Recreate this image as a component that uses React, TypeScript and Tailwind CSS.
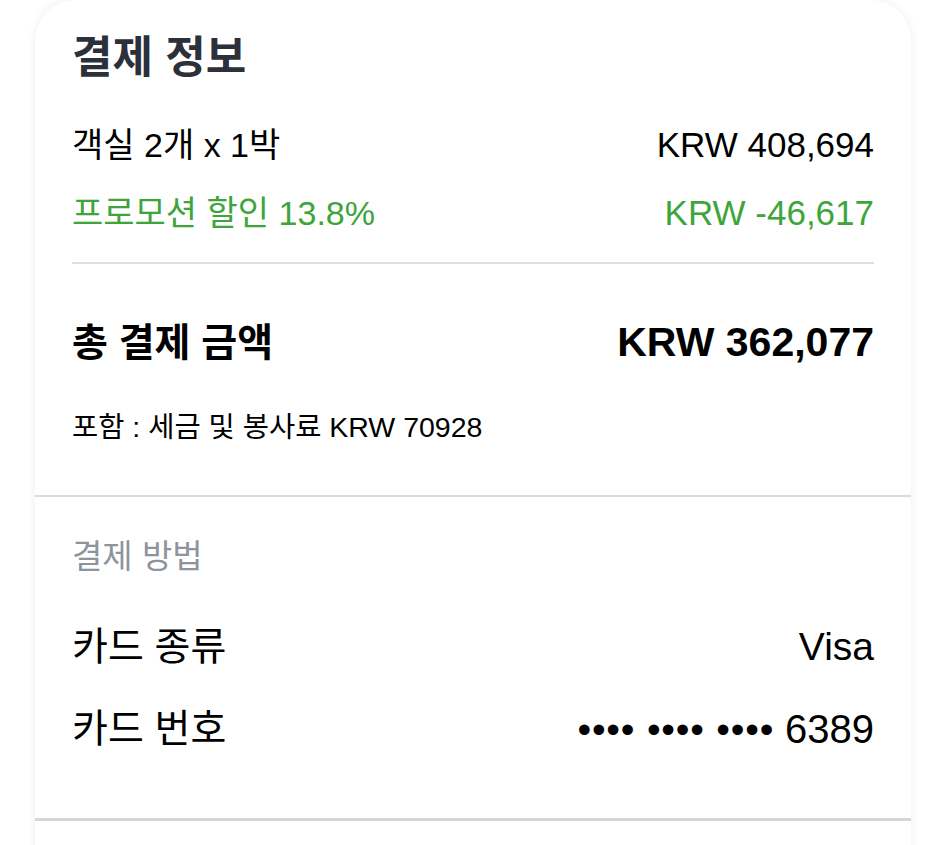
import React from 'react'

const font = "font-['Liberation_Sans','Noto_Sans_CJK_KR',sans-serif]"

export default function App() {
  return (
    <div className={`min-h-screen bg-white px-[35px] ${font}`}>
      <div className="rounded-t-[40px] bg-white shadow-[0_0_10px_rgba(0,0,0,0.07)]">
        {/* Payment summary */}
        <div className="px-[37px] pb-[48px]">
          <h2 className="h-[111px] pt-[34px] text-[44px] leading-[48px] font-bold text-[#2b303b]">결제 정보</h2>

          <div className="flex h-[68px] items-center justify-between text-[34px] text-black">
            <span>객실 2개 x 1박</span>
            <span className="text-[35px]">KRW 408,694</span>
          </div>
          <div className="flex h-[68px] items-center justify-between text-[34px] text-[#3da53a]">
            <span>프로모션 할인 13.8%</span>
            <span className="text-[35px]">KRW -46,617</span>
          </div>

          <div className="mt-[15px] h-[2px] bg-[#dedee3]" />

          <div className="mt-[45px] flex h-[68px] items-center justify-between font-bold text-black">
            <span className="text-[39px]">총 결제 금액</span>
            <span className="text-[41px]">KRW 362,077</span>
          </div>
          <div className="mt-[30px] flex h-[40px] items-center text-[28.5px] text-black">
            포함 : 세금 및 봉사료 KRW 70928
          </div>
        </div>

        {/* Payment method */}
        <div className="border-t-2 border-b-[3px] border-t-[#dcdce0] border-b-[#d6d6d6] px-[37px] pt-[40px] pb-[59px]">
          <div className="flex h-[40px] items-center text-[33px] text-[#8e949c]">결제 방법</div>
          <div className="mt-[40px] flex h-[60px] items-center justify-between text-[39px] text-black">
            <span>카드 종류</span>
            <span>Visa</span>
          </div>
          <div className="mt-[22px] flex h-[60px] items-center justify-between text-[39px] text-black">
            <span>카드 번호</span>
            <span>
              <span className="tracking-[0.8px]">•••• •••• ••••</span>{' '}
              <span className="text-[40px]">6389</span>
            </span>
          </div>
        </div>

        <div className="h-[120px] bg-white" />
      </div>
    </div>
  )
}
